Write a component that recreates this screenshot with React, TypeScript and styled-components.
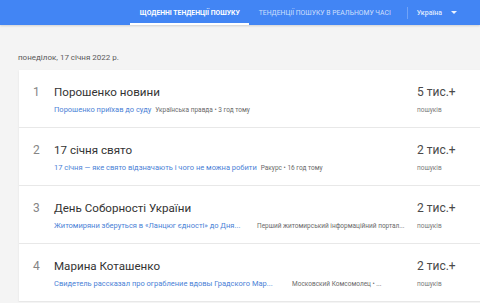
import React, {FunctionComponent} from "react";
import styled, {createGlobalStyle} from "styled-components";

interface Trend {
  title: string;
  link: string;
  source: string;
  count: string;
  linkWidth?: number;
  sourceGap?: number;
}

const trends: Trend[] = [
  {
    title: "Порошенко новини",
    link: "Порошенко приїхав до суду",
    source: "Українська правда • 3 год тому",
    count: "5 тис.+",
  },
  {
    title: "17 січня свято",
    link: "17 січня — яке свято відзначають і чого не можна робити",
    source: "Ракурс • 16 год тому",
    count: "2 тис.+",
  },
  {
    title: "День Соборності України",
    link: "Житомиряни зберуться в «Ланцюг єдності» до Дня...",
    source: "Перший житомирський інформаційний портал...",
    count: "2 тис.+",
    linkWidth: 190,
    sourceGap: 13,
  },
  {
    title: "Марина Коташенко",
    link: "Свидетель рассказал про ограбление вдовы Градского Мар...",
    source: "Московский Комсомолец • ...",
    count: "2 тис.+",
    linkWidth: 205,
    sourceGap: 33,
  },
];

const GlobalStyle = createGlobalStyle`
  html, body {
    margin: 0;
    padding: 0;
    background: #f4f4f4;
    font-family: Roboto, "Liberation Sans", sans-serif;
    overflow: hidden;
  }
`;

const Header = styled.header`
  height: 25px;
  background: #4285f4;
  display: flex;
  align-items: stretch;
  justify-content: flex-end;
  padding-right: 23px;
  box-shadow: 0 1px 2px rgba(0, 0, 0, .15);
`;

const Tab = styled.div<{ $active?: boolean }>`
  display: flex;
  align-items: center;
  padding: 0 ${p => p.$active ? 9 : 8}px 0 ${p => p.$active ? 10 : 10}px;
  font-size: 6.8px;
  font-weight: ${p => p.$active ? 700 : 400};
  color: ${p => p.$active ? "#fff" : "rgba(255, 255, 255, .75)"};
  box-shadow: ${p => p.$active ? "inset 0 -2px 0 #fff" : "none"};
  white-space: nowrap;
`;

const Divider = styled.div`
  width: 1px;
  height: 12px;
  align-self: center;
  margin: 0 9px 0 8px;
  background: rgba(255, 255, 255, .25);
`;

const Country = styled.div`
  display: flex;
  align-items: center;
  gap: 9px;
  font-size: 7px;
  font-weight: 500;
  color: rgba(255, 255, 255, .85);
`;

const Caret = styled.span`
  width: 0;
  height: 0;
  border-left: 3px solid transparent;
  border-right: 3px solid transparent;
  border-top: 3px solid rgba(255, 255, 255, .9);
`;

const Main = styled.main`
  padding: 28px 0 0 18px;
`;

const DateLabel = styled.div`
  font-size: 8px;
  line-height: 10px;
  color: #5a5a5a;
  margin-bottom: 7px;
`;

const Card = styled.div`
  margin-left: 1px;
  background: #fff;
  box-shadow: 0 1px 2px rgba(0, 0, 0, .08);
`;

const Row = styled.div`
  display: flex;
  height: 58px;
  border-bottom: 1px solid #e8e8e8;
  box-sizing: border-box;
`;

const Index = styled.div`
  width: 21px;
  padding: 15px 0 0 14px;
  font-size: 12px;
  line-height: 14px;
  color: #858585;
`;

const Details = styled.div`
  flex: 1;
  min-width: 0;
  padding-top: 15px;
`;

const Title = styled.div`
  font-size: 11.6px;
  line-height: 14px;
  color: #333;
`;

const Meta = styled.div`
  display: flex;
  align-items: baseline;
  margin-top: 6px;
  line-height: 10px;
  white-space: nowrap;
`;

const Link = styled.span<{ $width?: number }>`
  font-size: 7.5px;
  color: #4a7fd6;
  flex: none;
  width: ${p => p.$width ? `${p.$width}px` : "auto"};
`;

const Source = styled.span<{ $gap?: number }>`
  font-size: 6.5px;
  color: #6a6a6a;
  margin-left: ${p => p.$gap ?? 4}px;
`;

const Count = styled.div`
  width: 63px;
  padding-top: 15px;
`;

const CountValue = styled.div`
  font-size: 12px;
  line-height: 14px;
  color: #4a4a4a;
`;

const CountLabel = styled.div`
  font-size: 6.5px;
  line-height: 10px;
  margin-top: 6px;
  color: #7a7a7a;
`;

const App: FunctionComponent = () => (
  <>
    <GlobalStyle />
    <Header>
      <Tab $active>ЩОДЕННІ ТЕНДЕНЦІЇ ПОШУКУ</Tab>
      <Tab>ТЕНДЕНЦІЇ ПОШУКУ В РЕАЛЬНОМУ ЧАСІ</Tab>
      <Divider />
      <Country>
        Україна
        <Caret />
      </Country>
    </Header>
    <Main>
      <DateLabel>понеділок, 17 січня 2022 р.</DateLabel>
      <Card>
        {trends.map((trend, index) => (
          <Row key={index}>
            <Index>{index + 1}</Index>
            <Details>
              <Title>{trend.title}</Title>
              <Meta>
                <Link $width={trend.linkWidth}>{trend.link}</Link>
                <Source $gap={trend.sourceGap}>{trend.source}</Source>
              </Meta>
            </Details>
            <Count>
              <CountValue>{trend.count}</CountValue>
              <CountLabel>пошуків</CountLabel>
            </Count>
          </Row>
        ))}
      </Card>
    </Main>
  </>
);

export default App;
